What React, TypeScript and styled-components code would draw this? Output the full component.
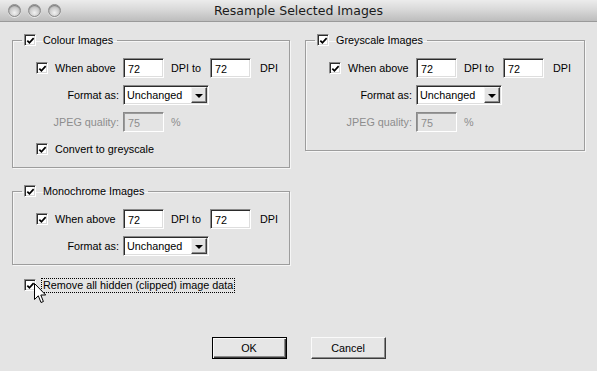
import React from "react"
import styled, { createGlobalStyle } from "styled-components"

const GlobalStyle = createGlobalStyle`
  html, body {
    margin: 0;
    padding: 0;
    background: #e4e4e4;
  }
  * {
    box-sizing: border-box;
  }
`

type Resolution = { from: string; to: string }

const CheckBox = ({ checked = true }: { checked?: boolean }) => (
  <Box>
    {checked && (
      <svg width="10" height="10" viewBox="0 0 10 10">
        <path d="M1.5 4.5 L3.8 7 L8.5 1.8" fill="none" stroke="#000" strokeWidth="1.9" />
      </svg>
    )}
  </Box>
)

const Field = ({ value, disabled }: { value: string; disabled?: boolean }) => (
  <Input $disabled={disabled}>{value}</Input>
)

const Dropdown = ({ value }: { value: string }) => (
  <Select>
    <span>{value}</span>
    <Arrow>
      <Triangle />
    </Arrow>
  </Select>
)

const ResolutionRows = ({ res, jpeg }: { res: Resolution; jpeg?: string }) => (
  <>
    <CheckLabel>
      <CheckBox />
      <span>When above</span>
    </CheckLabel>
    <Field value={res.from} />
    <Unit $pad={7}>DPI to</Unit>
    <Field value={res.to} />
    <Unit $pad={9}>DPI</Unit>

    <RightLabel>Format as:</RightLabel>
    <DropCell>
      <Dropdown value="Unchanged" />
    </DropCell>

    {jpeg && (
      <>
        <RightLabel $disabled>JPEG quality:</RightLabel>
        <Field value={jpeg} disabled />
        <Unit $pad={7} $disabled $rest>
          %
        </Unit>
      </>
    )}
  </>
)

const Group = ({
  title,
  padBottom = 9,
  children
}: {
  title: string
  padBottom?: number
  children: React.ReactNode
}) => (
  <Fieldset>
    <Legend>
      <CheckBox />
      <span>{title}</span>
    </Legend>
    <Rows $padBottom={padBottom}>{children}</Rows>
  </Fieldset>
)

const Cursor = () => (
  <CursorWrap>
    <svg width="13" height="21" viewBox="0 0 13 21">
      <path
        d="M0.5 0.5 L0.5 16.5 L4.3 12.8 L7 19.5 L9.4 18.5 L6.8 12 L11.7 12 Z"
        fill="#fff"
        stroke="#000"
        strokeWidth="1"
        strokeLinejoin="miter"
      />
    </svg>
  </CursorWrap>
)

const App = () => {
  const res = { from: "72", to: "72" }

  return (
    <Window>
      <GlobalStyle />
      <TitleBar>
        <Lights>
          <Light />
          <Light />
          <Light />
        </Lights>
        <Title>Resample Selected Images</Title>
      </TitleBar>
      <Body>
        <Columns>
          <Column>
            <Group title="Colour Images">
              <ResolutionRows res={res} jpeg="75" />
              <CheckLabel $wide>
                <CheckBox />
                <span>Convert to greyscale</span>
              </CheckLabel>
            </Group>
            <Spacer $h={16} />
            <Group title="Monochrome Images">
              <ResolutionRows res={res} />
            </Group>
            <RemoveRow>
              <CheckBox />
              <Focus>Remove all hidden (clipped) image data</Focus>
              <Cursor />
            </RemoveRow>
          </Column>
          <Column>
            <Group title="Greyscale Images" padBottom={19}>
              <ResolutionRows res={res} jpeg="75" />
            </Group>
          </Column>
        </Columns>
        <Footer>
          <Button $default>OK</Button>
          <Button>Cancel</Button>
        </Footer>
      </Body>
    </Window>
  )
}

const Window = styled.div`
  width: 597px;
  height: 371px;
  display: flex;
  flex-direction: column;
  background: #e4e4e4;
  font-family: "Liberation Sans", Arial, sans-serif;
  font-size: 10.8px;
  line-height: 14px;
  color: #000;
  overflow: hidden;
`

const TitleBar = styled.header`
  height: 22px;
  flex: none;
  display: flex;
  align-items: center;
  position: relative;
  background: linear-gradient(180deg, #ececec 0%, #d9d9d9 45%, #bdbdbd 100%);
  border-bottom: 1px solid #9a9a9a;
`

const Lights = styled.div`
  display: flex;
  gap: 7px;
  padding-left: 8px;
`

const Light = styled.span`
  width: 13px;
  height: 13px;
  border-radius: 50%;
  border: 1px solid #8c8c8c;
  background: radial-gradient(
    circle at 50% 70%,
    #f2f2f2 0%,
    #cfcfcf 45%,
    #a9a9a9 100%
  );
  box-shadow: inset 0 1px 1px rgba(0, 0, 0, 0.35), 0 1px 0 rgba(255, 255, 255, 0.6);
`

const Title = styled.h1`
  position: absolute;
  left: 0;
  right: 0;
  margin: 0;
  text-align: center;
  font-family: "DejaVu Sans", "Liberation Sans", sans-serif;
  font-size: 12.5px;
  font-weight: normal;
  color: #1a1a1a;
`

const Body = styled.main`
  flex: 1;
  display: flex;
  flex-direction: column;
  padding: 11px 13px 12px 12px;
`

const Columns = styled.div`
  display: grid;
  grid-template-columns: 278px 280px;
  column-gap: 15px;
  align-items: start;
`

const Column = styled.div`
  display: flex;
  flex-direction: column;
`

const Spacer = styled.div<{ $h: number }>`
  height: ${({ $h }) => $h}px;
`

const Fieldset = styled.fieldset`
  margin: 0;
  padding: 0;
  min-inline-size: 0;
  border: 1px solid #9d9d9d;
  box-shadow: 1px 1px 0 #f6f6f6, inset 1px 1px 0 #f6f6f6;
`

const Legend = styled.legend`
  display: flex;
  align-items: center;
  gap: 7px;
  height: 14px;
  margin-left: 9px;
  padding: 0 4px 0 2px;
`

const Rows = styled.div<{ $padBottom: number }>`
  display: grid;
  grid-template-columns: 87px 41px 46px 41px 1fr;
  grid-auto-rows: 20px;
  row-gap: 7px;
  align-items: center;
  padding: 11px 0 ${({ $padBottom }) => $padBottom - 1}px 23px;
`

const Box = styled.span`
  width: 12px;
  height: 12px;
  flex: none;
  display: inline-flex;
  align-items: center;
  justify-content: center;
  background: #fff;
  border: 1px solid;
  border-color: #8a8a8a #fff #fff #8a8a8a;
  box-shadow: inset 1px 1px 0 #2b2b2b, inset -1px -1px 0 #d8d8d8;

  svg {
    margin: 1px 0 0 1px;
  }
`

const CheckLabel = styled.label<{ $wide?: boolean }>`
  display: flex;
  align-items: center;
  gap: 7px;
  white-space: nowrap;
  grid-column: ${({ $wide }) => ($wide ? "1 / -1" : "auto")};
`

const RightLabel = styled.span<{ $disabled?: boolean }>`
  grid-column: 1;
  text-align: right;
  padding-right: 4px;
  color: ${({ $disabled }) => ($disabled ? "#8d8d8d" : "#000")};
  white-space: nowrap;
`

const Unit = styled.span<{ $pad: number; $disabled?: boolean; $rest?: boolean }>`
  grid-column: ${({ $rest }) => ($rest ? "3 / -1" : "auto")};
  padding-left: ${({ $pad }) => $pad}px;
  color: ${({ $disabled }) => ($disabled ? "#8d8d8d" : "#000")};
  white-space: nowrap;
`

const Input = styled.span<{ $disabled?: boolean }>`
  height: 20px;
  display: flex;
  align-items: center;
  padding: 1px 0 0 4px;
  background: ${({ $disabled }) => ($disabled ? "#e4e4e4" : "#fff")};
  color: ${({ $disabled }) => ($disabled ? "#8d8d8d" : "#000")};
  border: 1px solid;
  border-color: #8a8a8a #fff #fff #8a8a8a;
  box-shadow: ${({ $disabled }) =>
    $disabled
      ? "inset 1px 1px 0 #9a9a9a"
      : "inset 1px 1px 0 #2b2b2b, inset -1px -1px 0 #dedede"};
`

const DropCell = styled.div`
  grid-column: 2 / -1;
  display: flex;
`

const Select = styled.div`
  width: 86px;
  height: 20px;
  display: flex;
  align-items: center;
  justify-content: space-between;
  padding: 1px 1px 1px 3px;
  background: #fff;
  border: 1px solid;
  border-color: #8a8a8a #fff #fff #8a8a8a;
  box-shadow: inset 1px 1px 0 #2b2b2b, inset -1px -1px 0 #dedede;
`

const Arrow = styled.span`
  width: 16px;
  height: 16px;
  display: flex;
  align-items: center;
  justify-content: center;
  background: #e4e4e4;
  border: 1px solid;
  border-color: #f4f4f4 #3c3c3c #3c3c3c #f4f4f4;
  box-shadow: inset -1px -1px 0 #8a8a8a;
`

const Triangle = styled.span`
  width: 0;
  height: 0;
  border-left: 4px solid transparent;
  border-right: 4px solid transparent;
  border-top: 4px solid #000;
  margin: 1px 1px 0 0;
`

const RemoveRow = styled.div`
  position: relative;
  display: flex;
  align-items: center;
  gap: 6px;
  height: 14px;
  margin-top: 13px;
  padding-left: 12px;
`

const Focus = styled.span`
  padding: 0 1px 0 1px;
  outline: 1px dotted #000;
  outline-offset: 0;
  line-height: 13px;
  white-space: nowrap;
`

const CursorWrap = styled.span`
  position: absolute;
  left: 22px;
  top: 5px;
  line-height: 0;
`

const Footer = styled.footer`
  margin-top: auto;
  display: flex;
  justify-content: center;
  gap: 24px;
  padding-left: 1px;
`

const Button = styled.button<{ $default?: boolean }>`
  width: 75px;
  height: 22px;
  padding: 0;
  font: inherit;
  color: #000;
  background: #e6e6e6;
  border: 1px solid;
  border-color: ${({ $default }) =>
    $default ? "#000" : "#fafafa #3c3c3c #3c3c3c #fafafa"};
  box-shadow: ${({ $default }) =>
    $default
      ? "inset 1px 1px 0 #fafafa, inset -1px -1px 0 #3c3c3c, inset -2px -2px 0 #8a8a8a"
      : "inset -1px -1px 0 #8a8a8a"};
`

export default App
